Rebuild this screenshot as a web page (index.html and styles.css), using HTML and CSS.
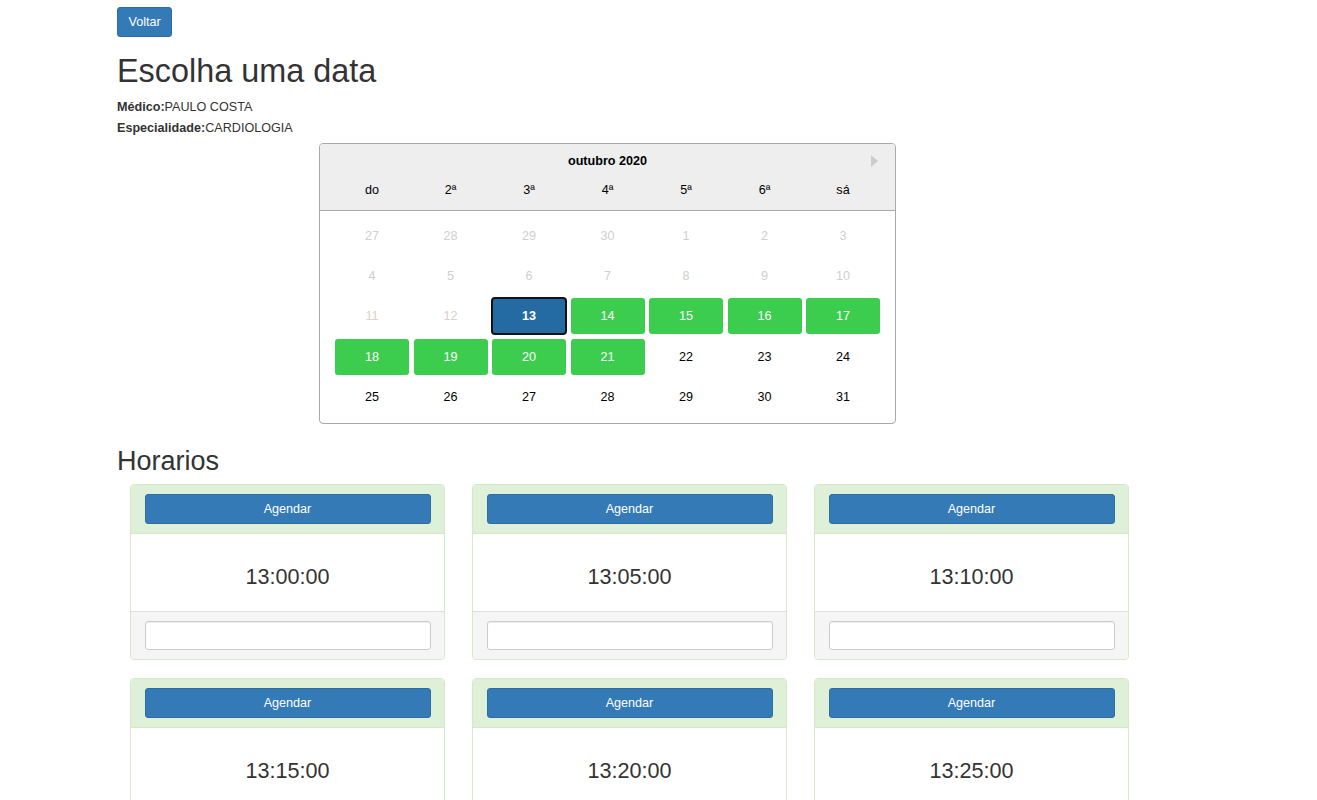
FILE: index.html
```html
<!DOCTYPE html>
<html lang="pt">
<head>
<meta charset="utf-8">
<title>Escolha uma data</title>
<link rel="stylesheet" href="styles.css">
</head>
<body>
<div class="page">
  <button class="btn btn-primary btn-back">Voltar</button>
  <h1 class="title">Escolha uma data</h1>
  <div class="info"><b>Médico:</b>PAULO COSTA</div>
  <div class="info"><b>Especialidade:</b>CARDIOLOGIA</div>

  <div class="calendar">
    <div class="cal-head">
      <div class="cal-title">outubro 2020<span class="cal-next"></span></div>
      <div class="cal-weekdays">
        <span>do</span><span>2ª</span><span>3ª</span><span>4ª</span><span>5ª</span><span>6ª</span><span>sá</span>
      </div>
    </div>
    <div class="cal-body">
      <span class="day off">27</span><span class="day off">28</span><span class="day off">29</span><span class="day off">30</span><span class="day off">1</span><span class="day off">2</span><span class="day off">3</span>
      <span class="day off">4</span><span class="day off">5</span><span class="day off">6</span><span class="day off">7</span><span class="day off">8</span><span class="day off">9</span><span class="day off">10</span>
      <span class="day past">11</span><span class="day past">12</span><span class="day selected">13</span><span class="day avail">14</span><span class="day avail">15</span><span class="day avail">16</span><span class="day avail">17</span>
      <span class="day avail">18</span><span class="day avail">19</span><span class="day avail">20</span><span class="day avail">21</span><span class="day">22</span><span class="day">23</span><span class="day">24</span>
      <span class="day">25</span><span class="day">26</span><span class="day">27</span><span class="day">28</span><span class="day">29</span><span class="day">30</span><span class="day">31</span>
    </div>
  </div>

  <h2 class="subtitle">Horarios</h2>
  <div class="slots">
    <div class="slot">
      <div class="slot-head"><button class="btn btn-primary btn-block">Agendar</button></div>
      <div class="slot-body">13:00:00</div>
      <div class="slot-foot"><input class="field" type="text"></div>
    </div>
    <div class="slot">
      <div class="slot-head"><button class="btn btn-primary btn-block">Agendar</button></div>
      <div class="slot-body">13:05:00</div>
      <div class="slot-foot"><input class="field" type="text"></div>
    </div>
    <div class="slot">
      <div class="slot-head"><button class="btn btn-primary btn-block">Agendar</button></div>
      <div class="slot-body">13:10:00</div>
      <div class="slot-foot"><input class="field" type="text"></div>
    </div>
    <div class="slot">
      <div class="slot-head"><button class="btn btn-primary btn-block">Agendar</button></div>
      <div class="slot-body">13:15:00</div>
      <div class="slot-foot"><input class="field" type="text"></div>
    </div>
    <div class="slot">
      <div class="slot-head"><button class="btn btn-primary btn-block">Agendar</button></div>
      <div class="slot-body">13:20:00</div>
      <div class="slot-foot"><input class="field" type="text"></div>
    </div>
    <div class="slot">
      <div class="slot-head"><button class="btn btn-primary btn-block">Agendar</button></div>
      <div class="slot-body">13:25:00</div>
      <div class="slot-foot"><input class="field" type="text"></div>
    </div>
  </div>
</div>
</body>
</html>
```

FILE: styles.css
```css
* { box-sizing: border-box; }
html, body { margin: 0; padding: 0; background: #fff; }
body {
  font-family: "Liberation Sans", Arial, sans-serif;
  font-size: 12.6px;
  line-height: 18px;
  color: #333;
}
.page { padding: 7px 0 40px 117px; }

.btn {
  display: inline-block;
  font-family: inherit;
  font-size: 12.6px;
  line-height: 18px;
  padding: 5px 10px;
  border: 1px solid #2e6da4;
  border-radius: 3px;
  background: #337ab7;
  color: #fff;
  cursor: pointer;
}
.btn-back { padding: 5px 10.5px; }
.btn-block { display: block; width: 100%; text-align: center; }

.title {
  font-size: 32.4px;
  font-weight: 500;
  line-height: 1.1;
  margin: 17px 0 7px;
  color: #333;
}
.info { line-height: 21px; }
.info b { font-weight: bold; }

.calendar {
  margin: 4px 0 0 202px;
  width: 577px;
  border: 1px solid #aaa;
  border-radius: 4px;
  overflow: hidden;
  color: #000;
}
.cal-head {
  background: #eee;
  border-bottom: 1px solid #aaa;
  padding: 7px 15px 10px;
}
.cal-title {
  position: relative;
  text-align: center;
  font-weight: bold;
  line-height: 20px;
}
.cal-next {
  position: absolute;
  right: 2px;
  top: 4px;
  width: 0;
  height: 0;
  border-top: 6px solid transparent;
  border-bottom: 6px solid transparent;
  border-left: 7px solid #ccc;
}
.cal-weekdays {
  margin-top: 9px;
  display: grid;
  grid-template-columns: repeat(7, 74px);
  column-gap: 4.5px;
  line-height: 20px;
  text-align: center;
}
.cal-body {
  padding: 7px 15px 8px;
  display: grid;
  grid-template-columns: repeat(7, 74px);
  grid-auto-rows: 36px;
  gap: 4.4px 4.5px;
}
.day {
  display: flex;
  align-items: center;
  justify-content: center;
  border-radius: 3px;
  color: #000;
}
.day.off { color: #cfcfcf; }
.day.past { color: #dcd0c7; }
.day.avail { background: #3dcd4e; color: #fff; }
.day.selected {
  background: #236ba2;
  color: #fff;
  font-weight: bold;
  border: 2px solid #111;
  margin: -1px;
  border-radius: 4px;
}

.subtitle {
  font-size: 27px;
  font-weight: 500;
  line-height: 1.1;
  margin: 23px 0 7px;
  color: #333;
}

.slots {
  margin-left: 13px;
  display: grid;
  grid-template-columns: repeat(3, 315px);
  column-gap: 27px;
  row-gap: 18px;
}
.slot {
  border: 1px solid #d6e9c6;
  border-radius: 4px;
  background: #fff;
  overflow: hidden;
}
.slot-head {
  background: #dff0d8;
  border-bottom: 1px solid #d6e9c6;
  padding: 9px 13.5px;
}
.slot-head .btn { height: 30px; }
.slot-body {
  height: 77px;
  padding-top: 31px;
  line-height: 24px;
  text-align: center;
  font-size: 21.6px;
  color: #333;
}
.slot-foot {
  background: #f5f5f5;
  border-top: 1px solid #ddd;
  padding: 9px 13.5px;
}
.field {
  display: block;
  width: 100%;
  height: 29px;
  border: 1px solid #ccc;
  border-radius: 3px;
  background: #fff;
  box-shadow: inset 0 1px 1px rgba(0,0,0,.075);
  font-family: inherit;
  font-size: 12.6px;
  padding: 4px 10px;
}
```
